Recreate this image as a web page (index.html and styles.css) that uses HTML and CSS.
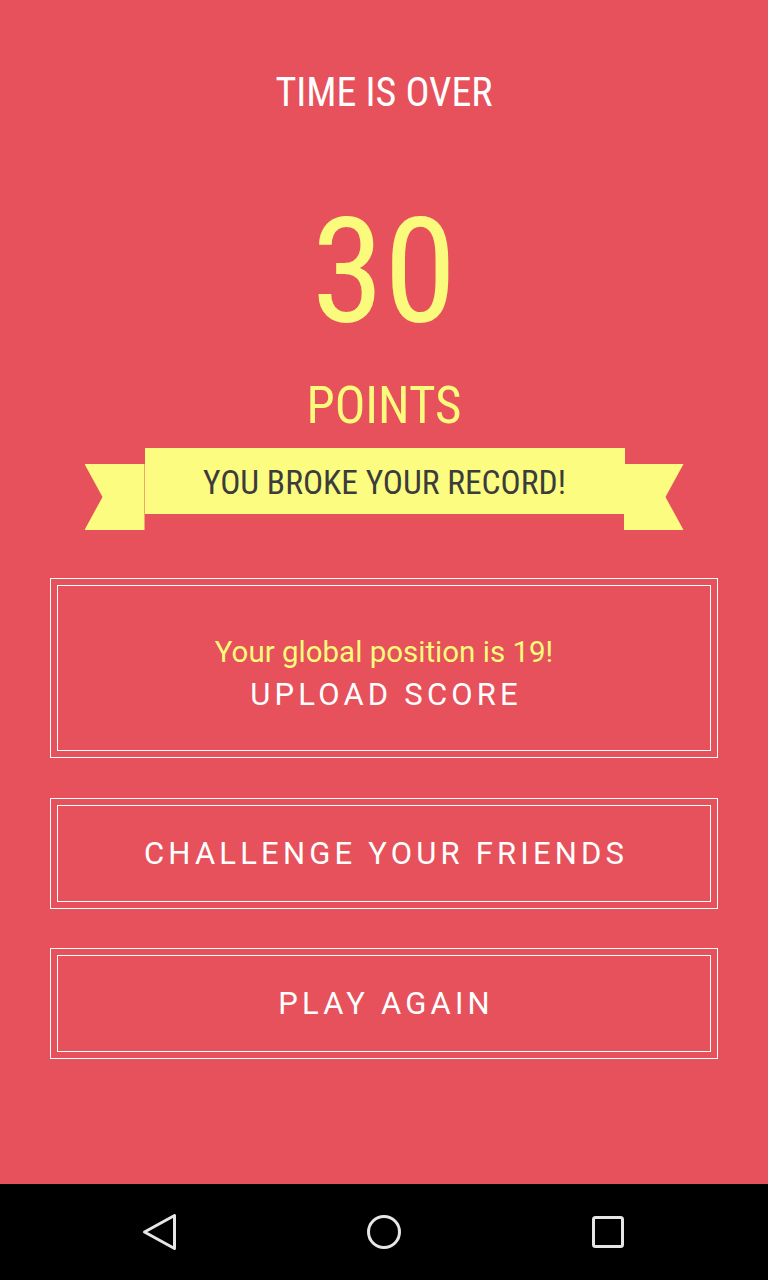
FILE: index.html
```html
<!DOCTYPE html>
<html lang="en">
<head>
<meta charset="utf-8"/>
<meta content="width=device-width, initial-scale=1.0" name="viewport"/>
<title>Time is over</title>
<link rel="stylesheet" href="styles.css">
</head>
<body>
<div class="tela">
  <h1 class="titulo">TIME IS OVER</h1>
  <div class="pontos">30</div>
  <div class="rotulo">POINTS</div>
  <div class="fita">
    <div class="faixa">YOU BROKE YOUR RECORD!</div>
  </div>
  <div class="botao alto">
    <div class="interno">
      <span class="posicao">Your global position is 19!</span>
      <span class="acao">UPLOAD SCORE</span>
    </div>
  </div>
  <div class="botao">
    <div class="interno">
      <span class="acao">CHALLENGE YOUR FRIENDS</span>
    </div>
  </div>
  <div class="botao">
    <div class="interno">
      <span class="acao">PLAY AGAIN</span>
    </div>
  </div>
</div>
<div class="navegacao">
  <div class="icone">
    <svg width="40" height="40" viewBox="0 0 40 40"><polygon points="4.5,20 34.5,3.5 34.5,36.5" fill="none" stroke="#e6e6e6" stroke-width="3" stroke-linejoin="round"/></svg>
  </div>
  <div class="icone">
    <svg width="40" height="40" viewBox="0 0 40 40"><circle cx="20" cy="20" r="15.5" fill="none" stroke="#e6e6e6" stroke-width="3"/></svg>
  </div>
  <div class="icone">
    <svg width="40" height="40" viewBox="0 0 40 40"><rect x="5.5" y="5.5" width="29" height="29" rx="2" fill="none" stroke="#e6e6e6" stroke-width="3"/></svg>
  </div>
</div>
</body>
</html>
```

FILE: styles.css
```css
body {
  margin: 0;
  font-family: 'Roboto', sans-serif;
  background: #000;
}
.tela {
  height: 1184px;
  background-color: #e6515b;
  box-sizing: border-box;
  padding-top: 73px;
  text-align: center;
  line-height: 1;
}
/* textos grandes usam a largura condensada */
.titulo, .pontos, .rotulo, .faixa {
  font-stretch: condensed;
}
.titulo {
  margin: 0;
  font-size: 40px;
  font-weight: normal;
  color: #fff;
}
.pontos {
  margin-top: 86px;
  font-size: 147px;
  color: #fafa7d;
}
.rotulo {
  margin-top: 34px;
  font-size: 51px;
  color: #fafa7d;
}
.fita {
  position: relative;
  width: 599px;
  height: 82px;
  margin: 17px auto 48px;
}
.fita::before,
.fita::after {
  content: "";
  position: absolute;
  top: 16px;
  width: 60px;
  height: 66px;
  background: #fcfc80;
}
.fita::before {
  left: 0;
  clip-path: polygon(0 0, 100% 0, 100% 100%, 0 100%, 18px 50%);
}
.fita::after {
  right: 0;
  clip-path: polygon(0 0, 100% 0, calc(100% - 18px) 50%, 100% 100%, 0 100%);
}
.faixa {
  position: relative;
  z-index: 1;
  margin: 0 59px 0 60px;
  height: 66px;
  background: #fcfc80;
  color: #3c3c3c;
  font-size: 33.5px;
  display: flex;
  align-items: center;
  justify-content: center;
  padding-top: 3px;
  box-sizing: border-box;
}
.botao {
  margin: 0 50px 40px;
  border: 1px solid #fff;
  padding: 6px;
}
.botao + .botao {
  margin-bottom: 39px;
}
.interno {
  border: 1px solid #fff;
  height: 95px;
  display: flex;
  flex-direction: column;
  align-items: center;
  justify-content: center;
}
.alto .interno {
  box-sizing: border-box;
  height: 166px;
  padding-top: 12px;
}
.posicao {
  font-size: 29.5px;
  color: #fafa7d;
  margin-bottom: 11px;
}
.acao {
  font-size: 31px;
  color: #fff;
  letter-spacing: 4.2px;
  margin-right: -4.2px;
}
.navegacao {
  height: 96px;
  background: #000;
  display: flex;
  align-items: center;
  padding: 0 48px;
}
.icone {
  flex: 1;
  display: flex;
  justify-content: center;
}
.icone svg {
  display: block;
}
```
